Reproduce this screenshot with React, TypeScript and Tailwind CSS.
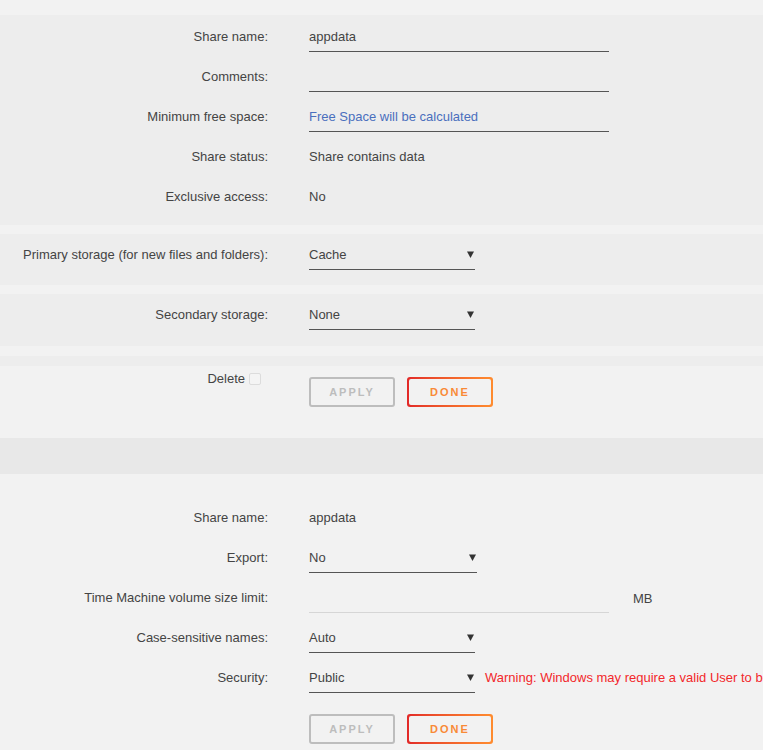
import type { ReactNode } from "react"

function Arrow() {
  return (
    <svg width="7" height="7" viewBox="0 0 7 7" className="mt-[4px] mr-[1px]">
      <path d="M0 0.5 L7 0.5 L3.5 7 Z" fill="#333" />
    </svg>
  )
}

function Row({ label, children }: { label: string; children?: ReactNode }) {
  return (
    <div className="flex h-10 items-start">
      <div className="w-[268px] shrink-0 pt-[13px] text-right leading-4">{label}</div>
      <div className="ml-[41px] flex items-start">{children}</div>
    </div>
  )
}

function TextInput({ value, className }: { value?: string; className?: string }) {
  return (
    <div
      className={
        "h-[36px] w-[300px] border-b border-[#555] pt-[13px] leading-4 " +
        (className ?? "")
      }
    >
      {value}
    </div>
  )
}

function Select({ value, width = "w-[166px]" }: { value: string; width?: string }) {
  return (
    <div
      className={
        width +
        " flex h-[36px] items-start justify-between border-b border-[#555] pt-[13px] leading-4"
      }
    >
      <span>{value}</span>
      <Arrow />
    </div>
  )
}

function Value({ children }: { children: ReactNode }) {
  return <div className="pt-[13px] leading-4">{children}</div>
}

function Buttons() {
  return (
    <div className="flex gap-3">
      <button className="h-[30px] w-[86px] rounded-[3px] border-2 border-[#bdbdbd] text-[11px] font-bold tracking-[2px] text-[#bdbdbd]">
        APPLY
      </button>
      <div className="h-[30px] w-[86px] rounded-[3px] bg-gradient-to-r from-[#e22828] to-[#ff8c2f] p-[2px]">
        <button className="h-full w-full rounded-[2px] bg-[#f2f2f2] text-[11px] font-bold tracking-[2px] text-[#f98a37]">
          DONE
        </button>
      </div>
    </div>
  )
}

export default function App() {
  return (
    <div
      className="min-h-screen w-full overflow-hidden bg-[#f2f2f2] pt-[15px] text-[13px] text-[#444]"
      style={{ fontFamily: '"Liberation Sans", Arial, sans-serif' }}
    >
      <div className="mb-[9px] bg-[#ededed] pb-[9px] pt-[1px]">
        <Row label="Share name:">
          <TextInput value="appdata" />
        </Row>
        <Row label="Comments:">
          <TextInput />
        </Row>
        <Row label="Minimum free space:">
          <TextInput value="Free Space will be calculated" className="text-[#4a6fbd]" />
        </Row>
        <Row label="Share status:">
          <Value>Share contains data</Value>
        </Row>
        <Row label="Exclusive access:">
          <Value>No</Value>
        </Row>
      </div>

      <div className="mb-[9px] bg-[#ededed] pb-[11px]">
        <Row label="Primary storage (for new files and folders):">
          <Select value="Cache" />
        </Row>
      </div>

      <div className="mb-[10px] bg-[#ededed] pb-[12px]">
        <Row label="Secondary storage:">
          <Select value="None" />
        </Row>
      </div>

      <div className="h-[10px] bg-[#ededed]" />

      <div className="flex h-[72px] items-start pt-[5px]">
        <div className="flex w-[268px] shrink-0 items-center justify-end pr-[7px] leading-4">
          <span>Delete</span>
          <span className="ml-[4px] h-[12px] w-[12px] rounded-[2px] border border-[#dcdcdc] bg-[#f4f4f4]" />
        </div>
        <div className="ml-[41px] mt-[6px]">
          <Buttons />
        </div>
      </div>

      <div className="h-[36px] bg-[#e8e8e8]" />

      <div className="pt-[23px]">
        <Row label="Share name:">
          <Value>appdata</Value>
        </Row>
        <Row label="Export:">
          <Select value="No" width="w-[168px]" />
        </Row>
        <Row label="Time Machine volume size limit:">
          <div className="h-[36px] w-[300px] border-b border-[#d6d6d6]" />
          <div className="ml-[24px] pt-[14px] leading-4">MB</div>
        </Row>
        <Row label="Case-sensitive names:">
          <Select value="Auto" />
        </Row>
        <Row label="Security:">
          <Select value="Public" />
          <div className="ml-[10px] whitespace-nowrap pt-[13px] leading-4 text-[#f3282b]">
            Warning: Windows may require a valid User to be defined for Public shares
          </div>
        </Row>
        <div className="ml-[309px] mt-[17px]">
          <Buttons />
        </div>
      </div>
    </div>
  )
}
